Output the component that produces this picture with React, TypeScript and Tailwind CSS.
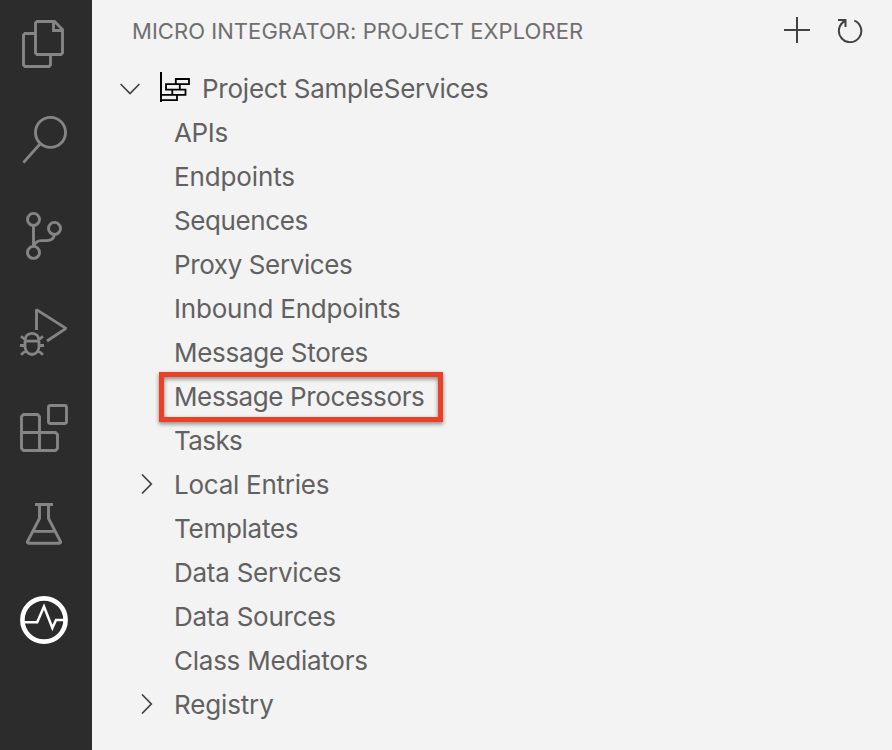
import type { ReactNode } from "react";

function ActivityIcon({ children, active = false }: { children: ReactNode; active?: boolean }) {
  return (
    <div className={`flex h-24 w-full items-center pl-5 ${active ? "text-white" : "text-[#858585]"}`}>
      <svg className="block h-12 w-12 shrink-0 overflow-visible" viewBox="0 0 48 48" fill="none" stroke="currentColor" strokeWidth="2.9">
        {children}
      </svg>
    </div>
  );
}

function ActivityBar() {
  return (
    <nav className="flex w-[92px] shrink-0 flex-col bg-[#2c2c2c]">
      <div className="-mt-1 flex flex-col">
        <ActivityIcon>
          <path d="M17 1.5H34.5L42.5 9.5V33L41 34.5H17L15.5 33V3Z" />
          <path d="M33.5 2V10.5H42" />
          <path d="M15.5 13.5H5L3.5 15V45L5 46.5H29L30.5 45V35" />
        </ActivityIcon>
        <ActivityIcon>
          <circle cx="30.5" cy="16.4" r="15" />
          <path d="M20.2 27.8L3.4 46.6" />
        </ActivityIcon>
        <ActivityIcon>
          <circle cx="13.5" cy="7.4" r="6" />
          <circle cx="13.5" cy="40.4" r="6" />
          <circle cx="34.5" cy="16.4" r="6" />
          <path d="M13.5 13.5V34.5C15 30.5 17.5 28.6 21 28.6H27C31 28.6 33.8 26.5 34.5 22.5" />
        </ActivityIcon>
        <ActivityIcon>
          <path d="M16.5 22V1.6L46 20.4L27 33" strokeLinejoin="bevel" />
          <path d="M5 33.2H19M5 33.2V38.5C5 43 8 46.5 12 46.5S19 43 19 38.5V33.2C19 28.5 16.5 25.4 12 25.4S5 28.5 5 33.2ZM0 37.5H5M19 37.5H24M1 28.2L5.5 32M23 28.2L18.5 32M1 46.8L6 42.5M23 46.8L18 42.5" strokeWidth="2.8" />
        </ActivityIcon>
        <ActivityIcon>
          <rect x="28.5" y="1.5" width="18" height="18" rx="2" />
          <path d="M3.5 10.5H17.5L19.5 12.5V28.5H35.5L37.5 30.5V44.5L35.5 46.5H3.5L1.5 44.5V12.5ZM1.5 28.5H19.5V46.5" />
        </ActivityIcon>
        <ActivityIcon>
          <path d="M15 4.5H33M19.5 5V18.5L7.5 41.5Q7 43.2 9 43.2H39Q41 43.2 40.5 41.5L28.5 18.5V5M13 31.4H35" />
        </ActivityIcon>
        <ActivityIcon active>
          <circle cx="24" cy="24" r="21.6" strokeWidth="4.6" />
          <path d="M4 26.2H17.2L24 10.5L32.4 32L36 24H44" strokeWidth="2.5" />
        </ActivityIcon>
      </div>
    </nav>
  );
}

type Row = { label: string; spacing: string; expandable?: boolean; highlighted?: boolean };

const rows: Row[] = [
  { label: "APIs", spacing: "tracking-[-0.35px]" },
  { label: "Endpoints", spacing: "tracking-[-0.12px]" },
  { label: "Sequences", spacing: "tracking-[-0.4px]" },
  { label: "Proxy Services", spacing: "tracking-[-0.38px]" },
  { label: "Inbound Endpoints", spacing: "tracking-[-0.2px]" },
  { label: "Message Stores", spacing: "tracking-[-0.28px]" },
  { label: "Message Processors", spacing: "tracking-[-0.38px]", highlighted: true },
  { label: "Tasks", spacing: "tracking-[-0.6px]" },
  { label: "Local Entries", spacing: "tracking-[-0.25px]", expandable: true },
  { label: "Templates", spacing: "tracking-[-0.26px]" },
  { label: "Data Services", spacing: "tracking-[-0.25px]" },
  { label: "Data Sources", spacing: "tracking-[-0.25px]" },
  { label: "Class Mediators", spacing: "tracking-[-0.25px]" },
  { label: "Registry", spacing: "tracking-[-0.15px]", expandable: true },
];

function TreeRow({ label, spacing, expandable, highlighted }: Row) {
  return (
    <div className="relative flex h-11 items-center pl-[49px]">
      <div className="w-[33px] shrink-0 pb-0.5">
        {expandable && (
          <svg className="block h-5 w-3" viewBox="0 0 12 20" fill="none" stroke="#424242" strokeWidth="1.7">
            <path d="M1 .5L10.3 10L1 19.5" />
          </svg>
        )}
      </div>
      <span className={`whitespace-nowrap ${spacing}`}>{label}</span>
      {highlighted && (
        <div className="absolute -top-[3px] left-[67px] h-[50px] w-[284px] border-5 border-[#ec4025] [filter:drop-shadow(0_2px_2px_rgba(0,0,0,0.45))]" />
      )}
    </div>
  );
}

export default function App() {
  return (
    <div className="flex h-[750px] w-[892px] overflow-hidden bg-[#f3f3f3] font-['Inter','Liberation_Sans',sans-serif] text-[#616161]">
      <ActivityBar />
      <main className="flex min-w-0 flex-1 flex-col">
        <header className="flex h-[67px] shrink-0 items-center pb-[5px] pl-10 pr-[29px]">
          <h1 className="flex-1 whitespace-nowrap text-[22px] font-normal leading-[30px] tracking-[0.045px] text-[#6f6f6f]">MICRO INTEGRATOR: PROJECT EXPLORER</h1>
          <div className="flex items-center gap-[27px] pb-0.5 text-[#424242]">
            <svg className="block h-[26px] w-[26px]" viewBox="0 0 26 26" fill="none" stroke="currentColor" strokeWidth="2">
              <path d="M13 0V26M0 13H26" />
            </svg>
            <svg className="block h-[26px] w-[26px]" viewBox="0 0 26 26" fill="none" stroke="currentColor" strokeWidth="2">
              <path d="M17.3 3.6A11.2 11.2 0 1 1 8 4M1 3H8.5V10" />
            </svg>
          </div>
        </header>
        <section className="flex flex-col text-[26px] leading-[44px]">
          <div className="flex h-11 items-center pl-7">
            <svg className="block h-3 w-5" viewBox="0 0 20 12" fill="none" stroke="#424242" strokeWidth="1.7">
              <path d="M.6 1L10 10.5L19.4 1" />
            </svg>
            <svg className="ml-5 block h-[30px] w-[30px] -translate-y-0.5" viewBox="0 0 30 30" fill="none" stroke="#000" strokeWidth="1.8">
              <path d="M1 0V30.4" strokeWidth="2" />
              <path d="M15.8 7H29V12.2H15.8ZM6 12.2H19.8V17.6H6ZM12.3 17.6H25.5V22.9H12.3ZM1 22.9H17V28.2H1Z" />
            </svg>
            <span className="ml-3 whitespace-nowrap tracking-[-0.24px]">Project SampleServices</span>
          </div>
          {rows.map((row) => (
            <TreeRow key={row.label} {...row} />
          ))}
        </section>
      </main>
    </div>
  );
}
